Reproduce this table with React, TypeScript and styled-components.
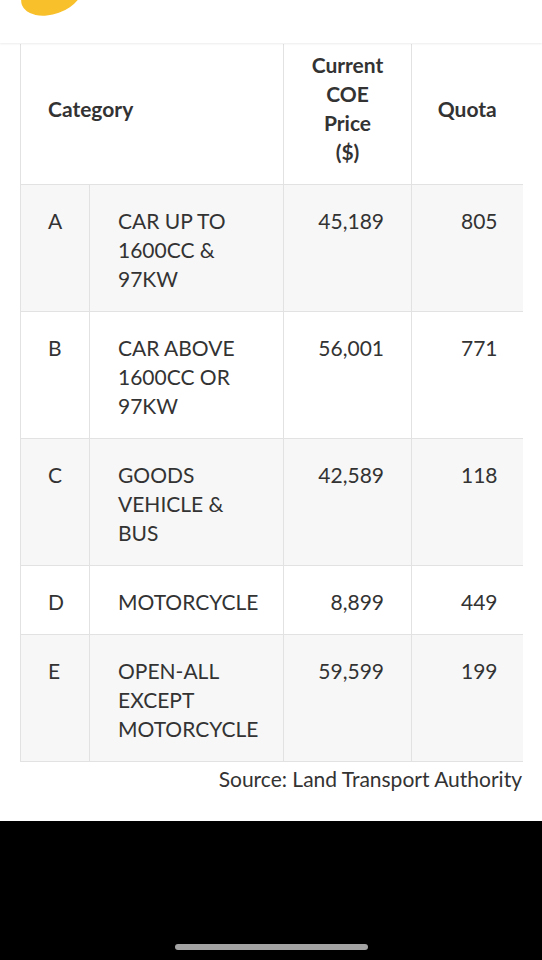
import styled, { createGlobalStyle } from "styled-components";

const GlobalStyle = createGlobalStyle`
  html, body {
    margin: 0;
    padding: 0;
    background: #ffffff;
  }
  body {
    font-family: Lato, "Open Sans", "Liberation Sans", sans-serif;
    color: #333333;
  }
`;

const Screen = styled.div`
  width: 542px;
  height: 960px;
  display: flex;
  flex-direction: column;
  overflow: hidden;
  background: #ffffff;
`;

const TopBar = styled.header`
  position: relative;
  z-index: 2;
  height: 43px;
  flex-shrink: 0;
  background: #ffffff;
  box-shadow: 0 1px 2px rgba(0, 0, 0, 0.08);
`;

const Blob = styled.svg`
  display: block;
`;

const Content = styled.main`
  flex: 1;
  padding: 1px 20px 0 20px;
`;

const Table = styled.table`
  width: 502px;
  border-collapse: collapse;
  table-layout: fixed;
  font-size: 21px;
  line-height: 29px;
  border-left: 1px solid #e2e2e2;
`;

const Row = styled.tr<{ $shaded?: boolean }>`
  background: ${(p) => (p.$shaded ? "#f7f7f7" : "#ffffff")};
  border-bottom: 1px solid #e2e2e2;
`;

const HeadCell = styled.th<{ $align?: string; $padLeft?: number }>`
  font-weight: 700;
  text-align: ${(p) => p.$align || "center"};
  vertical-align: middle;
  padding: 6px 10px 18px ${(p) => p.$padLeft ?? 10}px;
  border-right: 1px solid #e2e2e2;
  &:last-child {
    border-right: none;
  }
`;

const Cell = styled.td<{ $align?: string; $padRight?: number }>`
  text-align: ${(p) => p.$align || "left"};
  vertical-align: top;
  padding: 21px ${(p) => p.$padRight ?? 20}px 18px 27px;
  border-right: 1px solid #e2e2e2;
  &:last-child {
    border-right: none;
  }
`;

const DescCell = styled(Cell)`
  padding-left: 28px;
`;

const Source = styled.p`
  margin: 2px 0 0 0;
  width: 502px;
  text-align: right;
  font-size: 21px;
  line-height: 29px;
`;

const Footer = styled.footer`
  height: 139px;
  flex-shrink: 0;
  background: #000000;
  display: flex;
  align-items: flex-end;
  padding-left: 175px;
  padding-bottom: 10px;
  box-sizing: border-box;
`;

const HomeBar = styled.div`
  width: 193px;
  height: 6px;
  border-radius: 3px;
  background: #a3a3a3;
`;

interface CoeRow {
  cat: string;
  desc: string;
  price: string;
  quota: string;
}

const rows: CoeRow[] = [
  { cat: "A", desc: "CAR UP TO 1600CC & 97KW", price: "45,189", quota: "805" },
  { cat: "B", desc: "CAR ABOVE 1600CC OR 97KW", price: "56,001", quota: "771" },
  { cat: "C", desc: "GOODS VEHICLE & BUS", price: "42,589", quota: "118" },
  { cat: "D", desc: "MOTORCYCLE", price: "8,899", quota: "449" },
  { cat: "E", desc: "OPEN-ALL EXCEPT MOTORCYCLE", price: "59,599", quota: "199" },
];

function App() {
  return (
    <Screen>
      <GlobalStyle />
      <TopBar>
        <Blob width="100" height="20" viewBox="0 0 100 20">
          <ellipse
            cx="52"
            cy="-6"
            rx="32"
            ry="20"
            transform="rotate(-20 52 -6)"
            fill="#f8c02b"
          />
        </Blob>
      </TopBar>
      <Content>
        <Table>
          <colgroup>
            <col style={{ width: 69 }} />
            <col style={{ width: 194 }} />
            <col style={{ width: 128 }} />
            <col style={{ width: 111 }} />
          </colgroup>
          <thead>
            <Row>
              <HeadCell colSpan={2} $align="left" $padLeft={27}>
                Category
              </HeadCell>
              <HeadCell>
                Current
                <br />
                COE
                <br />
                Price
                <br />
                ($)
              </HeadCell>
              <HeadCell>Quota</HeadCell>
            </Row>
          </thead>
          <tbody>
            {rows.map((r, i) => (
              <Row key={r.cat} $shaded={i % 2 === 0}>
                <Cell>{r.cat}</Cell>
                <DescCell $padRight={20}>{r.desc}</DescCell>
                <Cell $align="right" $padRight={27}>
                  {r.price}
                </Cell>
                <Cell $align="right" $padRight={25}>
                  {r.quota}
                </Cell>
              </Row>
            ))}
          </tbody>
        </Table>
        <Source>Source: Land Transport Authority</Source>
      </Content>
      <Footer>
        <HomeBar />
      </Footer>
    </Screen>
  );
}

export default App;
